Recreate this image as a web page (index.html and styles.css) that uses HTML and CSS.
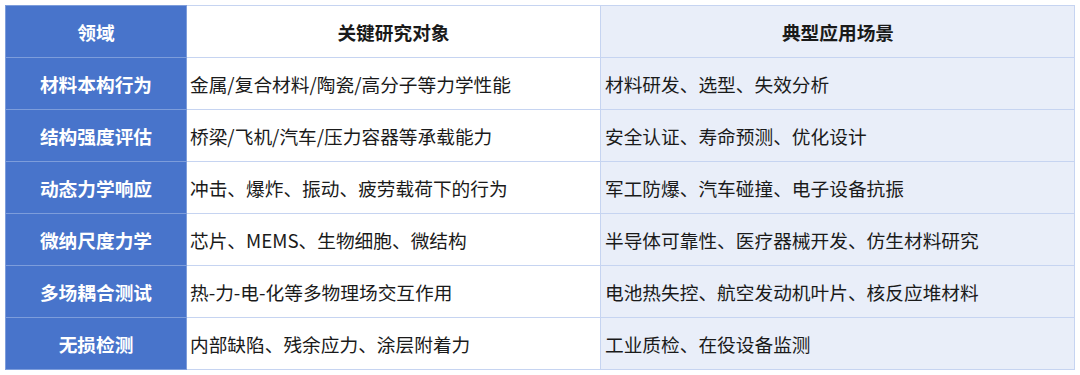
FILE: index.html
```html
<!DOCTYPE html>
<html lang="zh">
<head>
<meta charset="utf-8">
<link rel="stylesheet" href="styles.css">
</head>
<body>
<table class="grid">
  <colgroup>
    <col class="c1"><col class="c2"><col class="c3">
  </colgroup>
  <thead>
    <tr>
      <th class="field">领域</th>
      <th class="obj">关键研究对象</th>
      <th class="app">典型应用场景</th>
    </tr>
  </thead>
  <tbody>
    <tr><th class="field">材料本构行为</th><td class="obj">金属/复合材料/陶瓷/高分子等力学性能</td><td class="app">材料研发、选型、失效分析</td></tr>
    <tr><th class="field">结构强度评估</th><td class="obj">桥梁/飞机/汽车/压力容器等承载能力</td><td class="app">安全认证、寿命预测、优化设计</td></tr>
    <tr><th class="field">动态力学响应</th><td class="obj">冲击、爆炸、振动、疲劳载荷下的行为</td><td class="app">军工防爆、汽车碰撞、电子设备抗振</td></tr>
    <tr><th class="field">微纳尺度力学</th><td class="obj">芯片、MEMS、生物细胞、微结构</td><td class="app">半导体可靠性、医疗器械开发、仿生材料研究</td></tr>
    <tr><th class="field">多场耦合测试</th><td class="obj">热-力-电-化等多物理场交互作用</td><td class="app">电池热失控、航空发动机叶片、核反应堆材料</td></tr>
    <tr><th class="field">无损检测</th><td class="obj">内部缺陷、残余应力、涂层附着力</td><td class="app">工业质检、在役设备监测</td></tr>
  </tbody>
</table>
</body>
</html>
```

FILE: styles.css
```css
html, body {
  margin: 0;
  padding: 0;
  background: #ffffff;
}
body {
  padding: 5px 0 0 5px;
  font-family: "Noto Sans CJK SC", "Noto Sans", sans-serif;
}
.grid {
  border-collapse: collapse;
  table-layout: fixed;
  width: 1069px;
  border: 1px solid #b7c8ec;
  border-right-color: #9bb4e6;
  border-bottom-color: #9bb4e6;
}
.c1 { width: 181px; }
.c2 { width: 414px; }
.c3 { width: 474px; }
.grid th, .grid td {
  border: 1px solid #c6d4f1;
  height: 51px;
  padding: 0 3px;
  font-size: 18.7px;
  line-height: 24px;
  color: #1a1a1a;
  vertical-align: middle;
  font-weight: normal;
  white-space: nowrap;
}
.grid thead th {
  height: 51px;
  font-weight: bold;
  text-align: center;
}
.grid .field {
  background: #4874cb;
  color: #ffffff;
  font-weight: bold;
  text-align: center;
  border-color: #7d9ddb;
}
.grid td.app, .grid th.app {
  background: #e9eef9;
  padding-left: 4px;
}
.grid td.obj {
  background: #ffffff;
  text-align: left;
}
```
